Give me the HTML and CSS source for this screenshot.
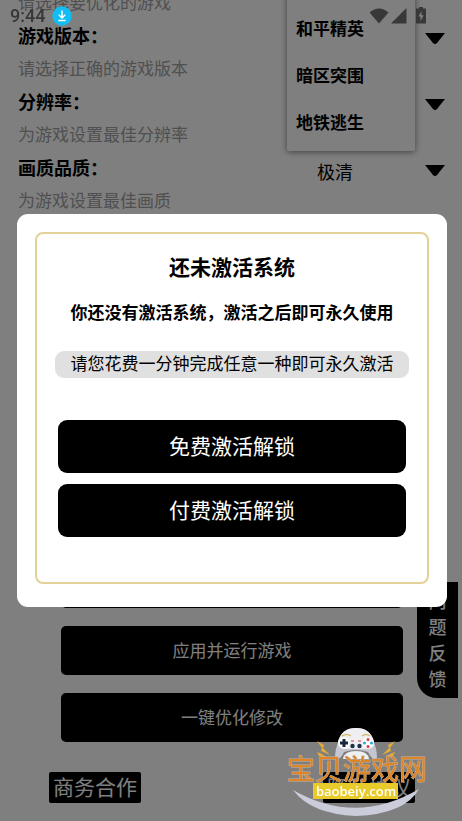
FILE: index.html
```html
<!DOCTYPE html>
<html lang="zh-CN">
<head>
<meta charset="utf-8">
<meta name="viewport" content="width=device-width, initial-scale=1">
<title>画质优化</title>
<link rel="stylesheet" href="styles.css">
</head>
<body>
<main class="page">
  <section class="settings">
    <div class="setting setting-partial">
      <p class="hint">请选择要优化的游戏</p>
    </div>
    <div class="setting">
      <label class="setting-title" for="version">游戏版本：</label>
      <p class="hint">请选择正确的游戏版本</p>
      <div class="picker">
        <select id="version"><option></option></select>
        <svg class="caret" viewBox="0 0 20 12" aria-hidden="true"><path d="M0 0H20L12 10Q10 12 8 10Z"/></svg>
      </div>
    </div>
    <div class="setting">
      <label class="setting-title" for="resolution">分辨率：</label>
      <p class="hint">为游戏设置最佳分辨率</p>
      <div class="picker">
        <select id="resolution"><option></option></select>
        <svg class="caret" viewBox="0 0 20 12" aria-hidden="true"><path d="M0 0H20L12 10Q10 12 8 10Z"/></svg>
      </div>
    </div>
    <div class="setting">
      <label class="setting-title" for="quality">画质品质：</label>
      <p class="hint">为游戏设置最佳画质</p>
      <div class="picker">
        <select id="quality"><option>极清</option></select>
        <svg class="caret" viewBox="0 0 20 12" aria-hidden="true"><path d="M0 0H20L12 10Q10 12 8 10Z"/></svg>
      </div>
    </div>
  </section>

  <section class="actions">
    <button class="action" type="button" aria-label="优化"></button>
    <button class="action" type="button">应用并运行游戏</button>
    <button class="action" type="button">一键优化修改</button>
  </section>

  <footer class="footer">
    <button class="link-button" type="button">商务合作</button>
    <button class="link-button" type="button">隐私协议</button>
  </footer>

  <button class="feedback" type="button">问题反馈</button>

  <ul class="game-menu">
    <li><button type="button">和平精英</button></li>
    <li><button type="button">暗区突围</button></li>
    <li><button type="button">地铁逃生</button></li>
  </ul>
</main>

<div class="scrim">
  <section class="dialog" role="dialog" aria-labelledby="dialog-title">
    <div class="dialog-frame">
      <h1 class="dialog-title" id="dialog-title">还未激活系统</h1>
      <p class="dialog-text">你还没有激活系统，激活之后即可永久使用</p>
      <p class="dialog-note">请您花费一分钟完成任意一种即可永久激活</p>
      <div class="dialog-actions">
        <button type="button">免费激活解锁</button>
        <button type="button">付费激活解锁</button>
      </div>
    </div>
  </section>
</div>

<header class="status-bar">
  <span class="clock">9:44</span>
  <svg class="download" viewBox="0 0 20 20" aria-hidden="true">
    <circle cx="10" cy="10" r="9.7" fill="#12bdf6"/>
    <path d="M10 4.5V11.5M6.8 8.7L10 12L13.2 8.7M6.3 14.6H13.7" fill="none" stroke="#fff" stroke-width="1.5"/>
  </svg>
  <svg class="signals" viewBox="0 0 58 18" aria-hidden="true">
    <path d="M1.500 5.500Q11 -2.500 20.500 5.500L11 16.500Z"/>
    <path d="M38.500 1V16.500H23Z"/>
    <path d="M51 0H55V1.500H58V16.500H48V1.500H51Z"/>
    <path d="M53.500 4L50.500 9.500H52.500V14L55.700 8.300H53.500Z" fill="#808080"/>
  </svg>
</header>

<svg class="watermark" viewBox="0 0 150 97" role="img" aria-label="宝贝游戏网 baobeiy.com">
  <path d="M10 66Q73 102 136 65Q122 90 73 92Q28 90 10 66Z" fill="#cbccda"/>
  <path d="M34 17L41 21L40 24L47 31L38 27L39 24ZM34 28L39 30L44 34L36 32Z" fill="#e5ad37"/>
  <path d="M112 17L105 21L106 24L99 31L108 27L107 24ZM112 28L107 30L102 34L110 32Z" fill="#e5ad37"/>
  <path d="M56 17Q59 4 73 4Q87 4 90 17Q94 24 94 34Q90 38 85 28Q73 24 61 28Q56 38 52 34Q52 24 56 17Z" fill="#c5c6d2"/>
  <path d="M55 17Q59 4 73 4Q87 4 91 17Q92 25 84 25H62Q54 25 55 17Z" fill="#efeff2"/>
  <path d="M60 35Q61 27 73 27Q85 27 86 35Z" fill="#eff0f3"/>
  <path d="M59 12Q64 9 68 12M79 12Q83 9 87 12" fill="none" stroke="#d6b96c" stroke-width="1.500"/>
  <circle cx="61" cy="19" r="5.500" fill="#fff"/>
  <path d="M61 15V23M57 19H65" stroke="#17273c" stroke-width="3"/>
  <circle cx="85" cy="19" r="5.500" fill="#fff"/>
  <g fill="#e33a43"><circle cx="85" cy="15.500" r="1.500"/><circle cx="85" cy="22.500" r="1.500"/></g>
  <g fill="#2ba8d4"><circle cx="81.500" cy="19" r="1.500"/><circle cx="88.500" cy="19" r="1.500"/></g>
  <g fill="#1d3348"><circle cx="69.500" cy="22" r="2.200"/><circle cx="76.500" cy="22" r="2.200"/></g>
  <path d="M68 17H71M75 17H78" stroke="#d33c46"/>
  <text class="mark-name" x="4" y="56">宝贝游戏网</text>
  <rect x="30" y="59" width="85" height="16" fill="#e8cb2b"/>
  <text class="mark-url" x="73" y="72">baobeiy.com</text>
</svg>
</body>
</html>
```

FILE: styles.css
```css
* {
  box-sizing: border-box;
}

body {
  margin: 0;
  background: #fff;
  color: #000;
  font-family: Roboto, "Noto Sans CJK SC", sans-serif;
  font-size: 17px;
}

p,
h1,
ul {
  margin: 0;
  padding: 0;
}

button,
select {
  border: 0;
  font: inherit;
}

.page {
  position: relative;
  display: flex;
  flex-direction: column;
  min-height: 100vh;
  overflow: hidden;
}

.settings {
  padding: 0 17px 0 18px;
}

.setting {
  display: grid;
  grid-template-columns: 1fr 158px;
  grid-auto-rows: 33px;
  line-height: 33px;
}

.setting-partial {
  margin-top: -13px;
}

.setting-title {
  font-size: 18px;
  font-weight: 700;
}

.hint {
  grid-column: 1;
  color: #a0a0a0;
}

.picker {
  position: relative;
  grid-column: 2;
  grid-row: 1;
}

.picker select {
  display: block;
  width: 100%;
  height: 40px;
  padding: 0 0 0 30px;
  appearance: none;
  background: transparent;
  color: #000;
  font-size: 18px;
}

.caret {
  position: absolute;
  top: 13px;
  right: 0;
  width: 20px;
  pointer-events: none;
}

.actions {
  display: grid;
  gap: 18px;
  margin-top: auto;
  padding: 0 59px 0 61px;
}

.action {
  height: 49px;
  padding-bottom: 3px;
  border-radius: 5px;
  background: #000;
  color: #fff;
}

.footer {
  display: flex;
  justify-content: space-between;
  padding: 30px 47px 18px 49px;
}

.link-button {
  height: 31px;
  padding: 2px 4px 0;
  border-radius: 2px;
  background: #000;
  color: #fff;
  font-size: 21px;
  line-height: 29px;
}

.feedback {
  position: absolute;
  right: 4px;
  bottom: 123px;
  width: 41px;
  padding: 7px 11px 5px;
  border-radius: 0 0 0 20px;
  background: #000;
  color: #fff;
  font-size: 18px;
  font-weight: 500;
  line-height: 26px;
}

.game-menu {
  position: absolute;
  top: -43px;
  left: 287px;
  width: 128px;
  padding: 47px 0 6px;
  border-radius: 2px;
  background: #fff;
  box-shadow: 0 1px 6px rgba(0, 0, 0, 0.5);
  list-style: none;
}

.game-menu button {
  display: block;
  width: 100%;
  height: 47px;
  padding: 0 9px;
  background: transparent;
  color: #000;
  font-weight: 700;
  text-align: left;
}

.scrim {
  position: fixed;
  inset: 0;
  display: grid;
  align-items: center;
  padding: 0 15px 0 17px;
  background: rgba(0, 0, 0, 0.5);
}

.dialog {
  padding: 18px 18px 23px;
  border-radius: 11px;
  background: #fff;
}

.dialog-frame {
  padding: 18px 18px 45px;
  border: 2px solid #e2d296;
  border-radius: 8px;
  text-align: center;
  white-space: nowrap;
}

.dialog-title {
  font-size: 21px;
  line-height: 32px;
}

.dialog-text {
  margin-top: 16px;
  font-weight: 700;
  line-height: 26px;
}

.dialog-note {
  margin: 25px 0 42px;
  border-radius: 9px;
  background: #e0e0e0;
  line-height: 27px;
}

.dialog-actions {
  display: grid;
  gap: 11px;
  padding: 0 3px;
}

.dialog-actions button {
  height: 53px;
  padding-bottom: 4px;
  border-radius: 9px;
  background: #000;
  color: #fff;
  font-size: 21px;
}

.status-bar {
  position: fixed;
  top: 0;
  right: 0;
  left: 0;
  display: flex;
  align-items: center;
  height: 31px;
  padding: 0 36px 0 10px;
}

.clock {
  color: #383838;
  font-size: 18px;
  font-weight: 500;
  line-height: 31px;
}

.download {
  width: 20px;
  margin-left: 7px;
}

.signals {
  width: 58px;
  height: 18px;
  margin-left: auto;
  fill: #383838;
}

.watermark {
  position: fixed;
  right: 29px;
  bottom: 0;
  width: 150px;
  height: 97px;
  pointer-events: none;
}

.mark-name {
  fill: #dd8527;
  stroke: #c9b49a;
  stroke-width: 1px;
  paint-order: stroke;
  font-family: "Noto Sans CJK SC", sans-serif;
  font-size: 28px;
}

.mark-url {
  fill: #fff;
  font-family: "Open Sans", sans-serif;
  font-size: 13px;
  font-weight: 600;
  text-anchor: middle;
}
```
